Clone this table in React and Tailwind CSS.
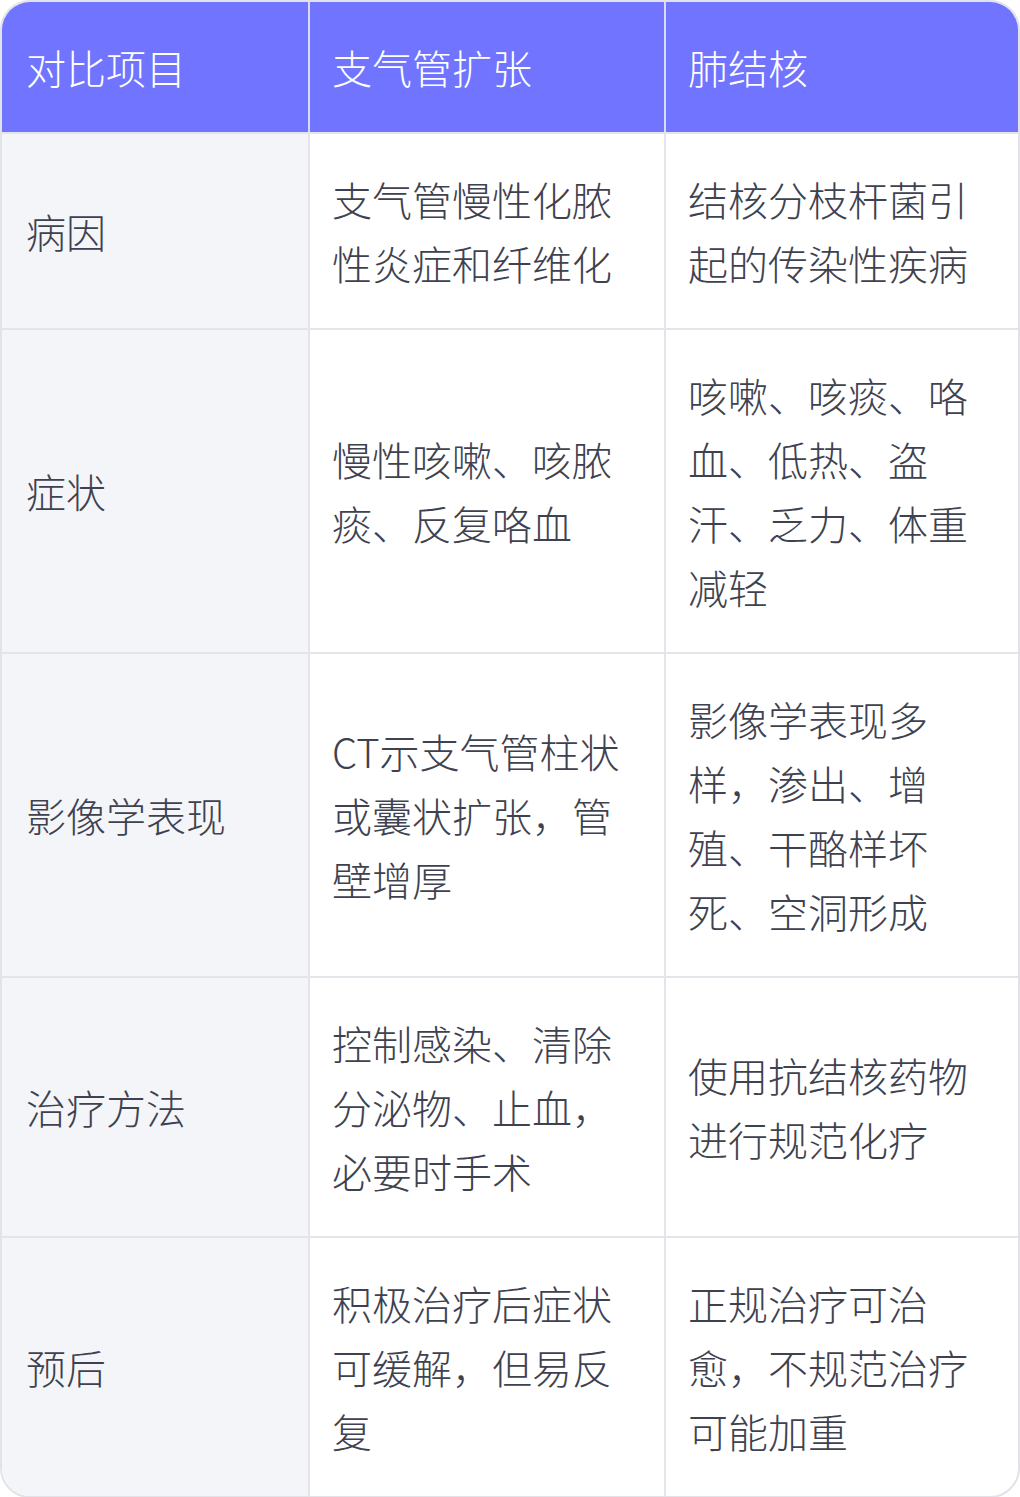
const rows = [
  ['病因', '支气管慢性化脓性炎症和纤维化', '结核分枝杆菌引起的传染性疾病'],
  ['症状', '慢性咳嗽、咳脓痰、反复咯血', '咳嗽、咳痰、咯血、低热、盗汗、乏力、体重减轻'],
  ['影像学表现', 'CT示支气管柱状或囊状扩张，管壁增厚', '影像学表现多样，渗出、增殖、干酪样坏死、空洞形成'],
  ['治疗方法', '控制感染、清除分泌物、止血，必要时手术', '使用抗结核药物进行规范化疗'],
  ['预后', '积极治疗后症状可缓解，但易反复', '正规治疗可治愈，不规范治疗可能加重'],
];

export default function App() {
  return (
    <div className="w-[1020px] bg-white font-['Noto_Sans_CJK_SC','Noto_Sans',sans-serif] text-[40px] leading-[64px] font-light">
      <div className="rounded-[30px] border-2 border-[#e2e3e8] overflow-hidden">
        <div className="flex bg-[#7074ff] text-white">
          <div className="w-[306px] py-[33px] pl-[24px] pr-6">对比项目</div>
          <div className="w-[356px] border-l-2 border-[#d9dbf0] py-[33px] pl-[22px] pr-6">支气管扩张</div>
          <div className="flex-1 border-l-2 border-[#d9dbf0] py-[33px] pl-[22px] pr-6">肺结核</div>
        </div>
        {rows.map((r) => (
          <div key={r[0]} className="flex border-t-2 border-[#e4e5ea] text-[#3e4250]">
            <div className="w-[306px] flex items-center bg-[#f4f5f9] py-[33px] pl-[24px] pr-6">{r[0]}</div>
            <div className="w-[356px] flex items-center border-l-2 border-[#e4e5ea] py-[33px] pl-[22px] pr-6">{r[1]}</div>
            <div className="flex-1 flex items-center border-l-2 border-[#e4e5ea] py-[33px] pl-[22px] pr-6">{r[2]}</div>
          </div>
        ))}
      </div>
    </div>
  );
}
